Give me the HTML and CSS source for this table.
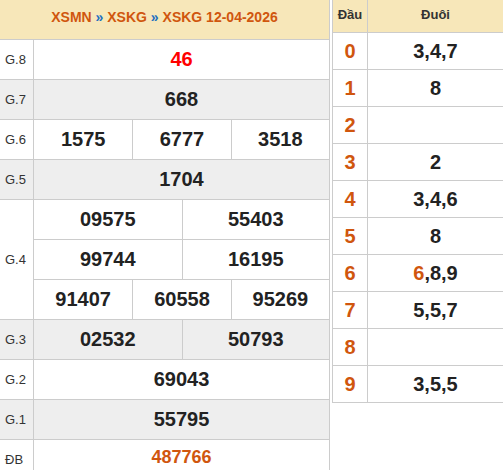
FILE: index.html
```html
<!DOCTYPE html>
<html lang="vi">
<head>
<meta charset="utf-8">
<title>XSKG 12-04-2026</title>
<link rel="stylesheet" href="styles.css">
</head>
<body>
<div class="page">
  <div class="kq">
    <div class="kq-head">XSMN <span class="sep">»</span> XSKG <span class="sep">»</span> XSKG 12-04-2026</div>
    <div class="row"><div class="lbl">G.8</div><div class="vals"><div class="v red">46</div></div></div>
    <div class="row alt"><div class="lbl">G.7</div><div class="vals"><div class="v">668</div></div></div>
    <div class="row"><div class="lbl">G.6</div><div class="vals"><div class="v">1575</div><div class="v">6777</div><div class="v">3518</div></div></div>
    <div class="row alt"><div class="lbl">G.5</div><div class="vals"><div class="v">1704</div></div></div>
    <div class="row">
      <div class="lbl">G.4</div>
      <div class="stack">
        <div class="vals"><div class="v">09575</div><div class="v">55403</div></div>
        <div class="vals"><div class="v">99744</div><div class="v">16195</div></div>
        <div class="vals"><div class="v">91407</div><div class="v">60558</div><div class="v">95269</div></div>
      </div>
    </div>
    <div class="row alt"><div class="lbl">G.3</div><div class="vals"><div class="v">02532</div><div class="v">50793</div></div></div>
    <div class="row"><div class="lbl">G.2</div><div class="vals"><div class="v">69043</div></div></div>
    <div class="row alt"><div class="lbl">G.1</div><div class="vals"><div class="v">55795</div></div></div>
    <div class="row"><div class="lbl">ĐB</div><div class="vals"><div class="v db">487766</div></div></div>
  </div>
  <div class="lt">
    <div class="lt-head"><div class="dau-h">Đầu</div><div class="duoi-h">Đuôi</div></div>
    <div class="lt-row"><div class="dau">0</div><div class="duoi">3,4,7</div></div>
    <div class="lt-row"><div class="dau">1</div><div class="duoi">8</div></div>
    <div class="lt-row"><div class="dau">2</div><div class="duoi"></div></div>
    <div class="lt-row"><div class="dau">3</div><div class="duoi">2</div></div>
    <div class="lt-row"><div class="dau">4</div><div class="duoi">3,4,6</div></div>
    <div class="lt-row"><div class="dau">5</div><div class="duoi">8</div></div>
    <div class="lt-row"><div class="dau">6</div><div class="duoi"><span class="hl">6</span>,8,9</div></div>
    <div class="lt-row"><div class="dau">7</div><div class="duoi">5,5,7</div></div>
    <div class="lt-row"><div class="dau">8</div><div class="duoi"></div></div>
    <div class="lt-row"><div class="dau">9</div><div class="duoi">3,5,5</div></div>
  </div>
</div>
</body>
</html>
```
FILE: styles.css
```css
* { box-sizing: border-box; }
html, body { margin: 0; padding: 0; overflow: hidden; background: #fff; }
body { font-family: "Liberation Sans", Arial, sans-serif; color: #222; }

.page { display: flex; align-items: flex-start; gap: 2px; }

.kq { width: 330px; flex: none; border-right: 1px solid #ccc; }
.kq-head {
  height: 40px;
  border-bottom: 1px solid #ccc;
  background: #f7e7b9;
  display: flex; align-items: center; justify-content: center;
  padding-bottom: 5px;
  font-size: 14px; font-weight: bold; color: #d0560e;
  white-space: pre;
}
.kq-head .sep { color: #1e6fc0; }

.row { display: flex; border-bottom: 1px solid #ccc; }
.row.alt { background: #eeeeee; }
.lbl {
  width: 34px; flex: none;
  border-right: 1px solid #ccc;
  padding-left: 5px;
  display: flex; align-items: center;
  font-size: 13px; color: #333;
}
.stack { flex: 1; display: flex; flex-direction: column; }
.vals { flex: 1; display: grid; grid-auto-flow: column; grid-auto-columns: 1fr; }
.stack .vals:not(:last-child) { border-bottom: 1px solid #ccc; }
.v {
  height: 39px;
  display: flex; align-items: center; justify-content: center;
  font-size: 20px; font-weight: bold; color: #222;
}
.v + .v { border-left: 1px solid #ccc; }
.v.red { color: #ff0000; }
.v.db { color: #d0560e; font-size: 18px; padding-bottom: 4px; }

.lt { width: 172px; flex: none; border-left: 1px solid #ccc; border-right: 1px solid #ccc; }
.lt-head {
  display: flex; height: 33px;
  border-bottom: 1px solid #ccc;
  background: #f7e7b9;
  font-size: 13px; font-weight: bold; color: #333;
}
.dau-h, .duoi-h { display: flex; align-items: center; justify-content: center; padding-bottom: 3px; }
.dau-h { width: 35px; flex: none; border-right: 1px solid #ccc; }
.duoi-h { flex: 1; }
.lt-row { display: flex; height: 37px; border-bottom: 1px solid #ccc; }
.dau {
  width: 35px; flex: none; border-right: 1px solid #ccc;
  display: flex; align-items: center; justify-content: center;
  font-size: 20px; font-weight: bold; color: #d0560e;
}
.duoi {
  flex: 1;
  display: flex; align-items: center; justify-content: center;
  font-size: 20px; font-weight: bold; color: #222;
}
.hl { color: #d0560e; }
```
